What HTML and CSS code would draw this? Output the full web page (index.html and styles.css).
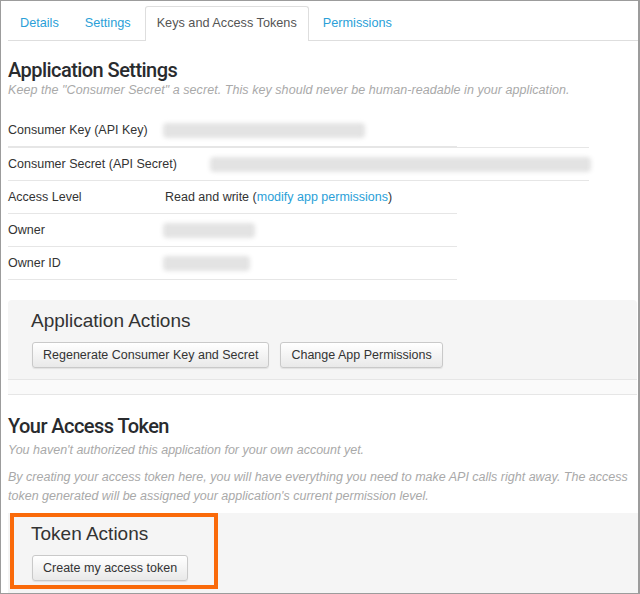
FILE: index.html
```html
<!DOCTYPE html>
<html>
<head>
<meta charset="utf-8">
<link rel="stylesheet" href="styles.css">
</head>
<body>
<div class="frame">
  <ul class="tabs">
    <li><a href="#">Details</a></li>
    <li><a href="#">Settings</a></li>
    <li class="active"><a href="#">Keys and Access Tokens</a></li>
    <li><a href="#">Permissions</a></li>
  </ul>

  <h2 class="title first">Application Settings</h2>
  <p class="note">Keep the "Consumer Secret" a secret. This key should never be human-readable in your application.</p>

  <div class="details">
    <div class="row">
      <span class="label">Consumer Key (API Key)</span>
      <span class="redact" style="width:202px"></span>
    </div>
    <div class="row wide">
      <span class="label long">Consumer Secret (API Secret)</span>
      <span class="redact" style="width:381px"></span>
    </div>
    <div class="row">
      <span class="label">Access Level</span>
      <span class="value">Read and write (<a href="#">modify app permissions</a>)</span>
    </div>
    <div class="row">
      <span class="label">Owner</span>
      <span class="redact" style="width:92px"></span>
    </div>
    <div class="row">
      <span class="label">Owner ID</span>
      <span class="redact" style="width:87px"></span>
    </div>
  </div>

  <div class="panel app-actions">
    <h3>Application Actions</h3>
    <div class="buttons">
      <button class="btn">Regenerate Consumer Key and Secret</button>
      <button class="btn">Change App Permissions</button>
    </div>
  </div>
  <div class="panel-foot"></div>

  <h2 class="title second">Your Access Token</h2>
  <p class="note lead">You haven't authorized this application for your own account yet.</p>
  <p class="note lead gap">By creating your access token here, you will have everything you need to make API calls right away. The access token generated will be assigned your application's current permission level.</p>

  <div class="panel token-actions">
    <h3>Token Actions</h3>
    <div class="buttons">
      <button class="btn">Create my access token</button>
    </div>
    <div class="highlight"></div>
  </div>
</div>
</body>
</html>
```

FILE: styles.css
```css
* { box-sizing: border-box; }

html, body {
  margin: 0;
  padding: 0;
  background: #fff;
}

body {
  font-family: "Liberation Sans", Arial, sans-serif;
  font-size: 12.5px;
  color: #333;
}

a {
  color: #2b9fd8;
  text-decoration: none;
}

.frame {
  width: 640px;
  height: 594px;
  border: 1px solid #9c9c9c;
  border-right-width: 2px;
  padding-left: 7px;
  display: flex;
  flex-direction: column;
  overflow: hidden;
}

/* Tabs */
.tabs {
  display: flex;
  list-style: none;
  margin: 5px 0 0;
  padding: 0;
  border-bottom: 1px solid #dedede;
  font-size: 12.7px;
}

.tabs a {
  display: block;
  line-height: 33px;
  padding: 0 11px;
  border: 1px solid transparent;
  border-bottom: 0;
  margin-right: 2px;
  border-radius: 3px 3px 0 0;
}

.tabs .active a {
  color: #555;
  background: #fff;
  border-color: #dedede;
  margin-bottom: -1px;
  padding-bottom: 1px;
}

/* Headings */
.title {
  font-family: Roboto, "Liberation Sans", sans-serif;
  font-weight: 500;
  font-size: 20px;
  line-height: 22px;
  color: #292b2e;
  margin: 0;
  letter-spacing: -0.55px;
}

.title.first { margin-top: 18px; }
.title.second { margin-top: 20px; }

.note {
  margin: 0;
  font-style: italic;
  color: #a9a9a9;
  line-height: 18px;
  letter-spacing: 0.06px;
}

.note.lead {
  line-height: 19px;
  margin-top: 4px;
  letter-spacing: 0;
}

.note.lead.gap { margin-top: 8px; }

/* Details table */
.details {
  margin-top: 15px;
  margin-bottom: 20px;
}

.row {
  display: flex;
  align-items: center;
  width: 449px;
  height: 33px;
  border-bottom: 1px solid #e6e6e6;
}

.row.wide {
  width: 581px;
  height: 34px;
  border-top: 1px solid #e6e6e6;
}

.label {
  flex: none;
  width: 155px;
}

.label.long { width: 202px; }

.value {
  white-space: nowrap;
  padding-left: 2px;
}

.redact {
  flex: none;
  height: 15px;
  background: #e3e3e3;
  border-radius: 4px;
  filter: blur(2px);
}

/* Panels */
.panel {
  background: #f5f5f5;
  padding: 10px 23px 11px;
  margin-right: 1px;
  border-radius: 4px 4px 0 0;
}

.panel h3 {
  margin: 0 0 10px;
  font-weight: normal;
  font-size: 19px;
  line-height: 22px;
  color: #333;
}

.buttons {
  display: flex;
  gap: 11px;
  padding-left: 1px;
}

.btn {
  height: 26px;
  padding: 0 10px;
  font-family: "Liberation Sans", Arial, sans-serif;
  font-size: 12.5px;
  color: #333;
  background: linear-gradient(#ffffff, #e9e9e9);
  border: 1px solid #c9c9c9;
  border-radius: 3px;
  box-shadow: 0 1px 1px rgba(0, 0, 0, 0.08);
}

.panel-foot {
  height: 16px;
  margin-right: 1px;
  background: #fafafa;
  border-top: 1px solid #e6e6e6;
  border-bottom: 1px solid #e6e6e6;
}

.token-actions {
  position: relative;
  margin-top: 7px;
  margin-right: 0;
  border-radius: 0;
  flex: 1;
}

.highlight {
  position: absolute;
  left: 2px;
  top: 0;
  width: 208px;
  height: 76px;
  border: 4px solid #fa6a0a;
}
```
